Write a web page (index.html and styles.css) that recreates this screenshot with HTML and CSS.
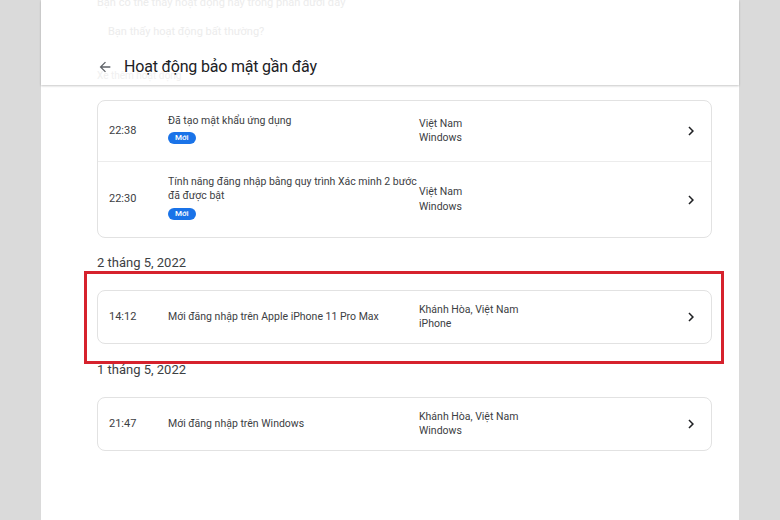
FILE: index.html
```html
<!DOCTYPE html>
<html lang="vi">
<head>
<meta charset="utf-8">
<link rel="stylesheet" href="styles.css">
</head>
<body>
<div class="panel">
  <header class="header">
    <div class="faint f1">Bạn có thể thấy hoạt động này trong phần dưới đây</div>
    <div class="faint f2">Bạn thấy hoạt động bất thường?</div>
    <div class="titlebar">
      <span class="faint f3">Xe thêm hoạt động</span>
      <svg class="back" viewBox="0 0 24 24" width="16" height="16"><path d="M20 11H7.83l5.59-5.59L12 4l-8 8 8 8 1.41-1.41L7.83 13H20v-2z" fill="#5f6368"/></svg>
      <h1 class="title">Hoạt động bảo mật gần đây</h1>
    </div>
  </header>
  <main class="content">
    <div class="card">
      <div class="row r1">
        <div class="time">22:38</div>
        <div class="desc"><div>Đã tạo mật khẩu ứng dụng</div><span class="badge">Mới</span></div>
        <div class="loc"><div>Việt Nam</div><div>Windows</div></div>
        <svg class="chev" viewBox="0 0 24 24" width="18" height="18"><path d="M10 6L8.59 7.41 13.17 12l-4.58 4.59L10 18l6-6z" fill="#202124"/></svg>
      </div>
      <div class="row r2">
        <div class="time">22:30</div>
        <div class="desc"><div>Tính năng đăng nhập bằng quy trình Xác minh 2 bước đã được bật</div><span class="badge">Mới</span></div>
        <div class="loc"><div>Việt Nam</div><div>Windows</div></div>
        <svg class="chev" viewBox="0 0 24 24" width="18" height="18"><path d="M10 6L8.59 7.41 13.17 12l-4.58 4.59L10 18l6-6z" fill="#202124"/></svg>
      </div>
    </div>
    <div class="date d1">2 tháng 5, 2022</div>
    <div class="highlight">
      <div class="card">
        <div class="row r3">
          <div class="time">14:12</div>
          <div class="desc"><div>Mới đăng nhập trên Apple iPhone 11 Pro Max</div></div>
          <div class="loc"><div>Khánh Hòa, Việt Nam</div><div>iPhone</div></div>
          <svg class="chev" viewBox="0 0 24 24" width="18" height="18"><path d="M10 6L8.59 7.41 13.17 12l-4.58 4.59L10 18l6-6z" fill="#202124"/></svg>
        </div>
      </div>
    </div>
    <div class="date d2">1 tháng 5, 2022</div>
    <div class="card">
      <div class="row r3">
        <div class="time">21:47</div>
        <div class="desc"><div>Mới đăng nhập trên Windows</div></div>
        <div class="loc"><div>Khánh Hòa, Việt Nam</div><div>Windows</div></div>
        <svg class="chev" viewBox="0 0 24 24" width="18" height="18"><path d="M10 6L8.59 7.41 13.17 12l-4.58 4.59L10 18l6-6z" fill="#202124"/></svg>
      </div>
    </div>
  </main>
</div>
</body>
</html>
```
FILE: styles.css
```css
html, body { margin: 0; padding: 0; }
body {
  background: #dadada;
  font-family: Roboto, "Noto Sans", "Liberation Sans", sans-serif;
  color: #3c4043;
  height: 520px;
  overflow: hidden;
}
.panel {
  margin-left: 41px;
  width: 698px;
  height: 520px;
  background: #fff;
}
.header {
  height: 85px;
  box-sizing: border-box;
  padding-left: 56px;
  box-shadow: 0 1px 2px rgba(0,0,0,0.22);
  position: relative;
  overflow: hidden;
  display: flex;
  flex-direction: column;
}
.faint { color: #ececec; font-size: 11px; line-height: 14px; white-space: nowrap; }
.f1 { margin-top: -4px; }
.f2 { margin-top: 15px; padding-left: 11px; }
.titlebar {
  margin-top: 18px;
  display: flex;
  align-items: center;
  gap: 11px;
  position: relative;
  height: 20px;
}
.f3 { position: absolute; left: 0; top: 12px; font-size: 10px; color: #f0f0f0; }
.back { position: relative; }
.title {
  margin: 0;
  font-size: 16px;
  font-weight: 400;
  line-height: 20px;
  color: #202124;
  position: relative;
  letter-spacing: -0.2px;
}
.content {
  padding: 15px 27px 0 56px;
}
.card {
  border: 1px solid #e2e2e2;
  border-radius: 8px;
  box-sizing: border-box;
}
.row {
  display: flex;
  align-items: center;
  font-size: 10.5px;
  line-height: 14.5px;
  color: #3c4043;
}
.row + .row { border-top: 1px solid #ececec; }
.r1 { height: 60px; }
.r2 { height: 75px; }
.r3 { height: 52px; }
.time { width: 59px; padding-left: 11px; flex: none; font-size: 11px; }
.desc { width: 251px; flex: none; margin-top: -4px; white-space: normal; }
.r2 .desc { width: 254px; margin-right: -3px; }
.r3 .desc { margin-top: 0; }
.badge {
  display: inline-block;
  margin-top: 4px;
  background: #1a73e8;
  color: #fff;
  font-size: 8px;
  line-height: 12px;
  height: 12px;
  padding: 0 7px;
  border-radius: 6px;
  font-weight: 500;
}
.loc { flex: 1; }
.chev { flex: none; margin-right: 11px; }
.date {
  font-size: 13px;
  line-height: 16px;
  color: #3c4043;
}
.d1 { margin-top: 17px; }
.d2 { margin-top: -2px; }
.highlight {
  margin: 0 -12px 0 -13px;
  border: 3px solid #d6222d;
  padding: 16px 9px 17px 10px;
}
.d2 + .card { margin-top: 19px; }
```
